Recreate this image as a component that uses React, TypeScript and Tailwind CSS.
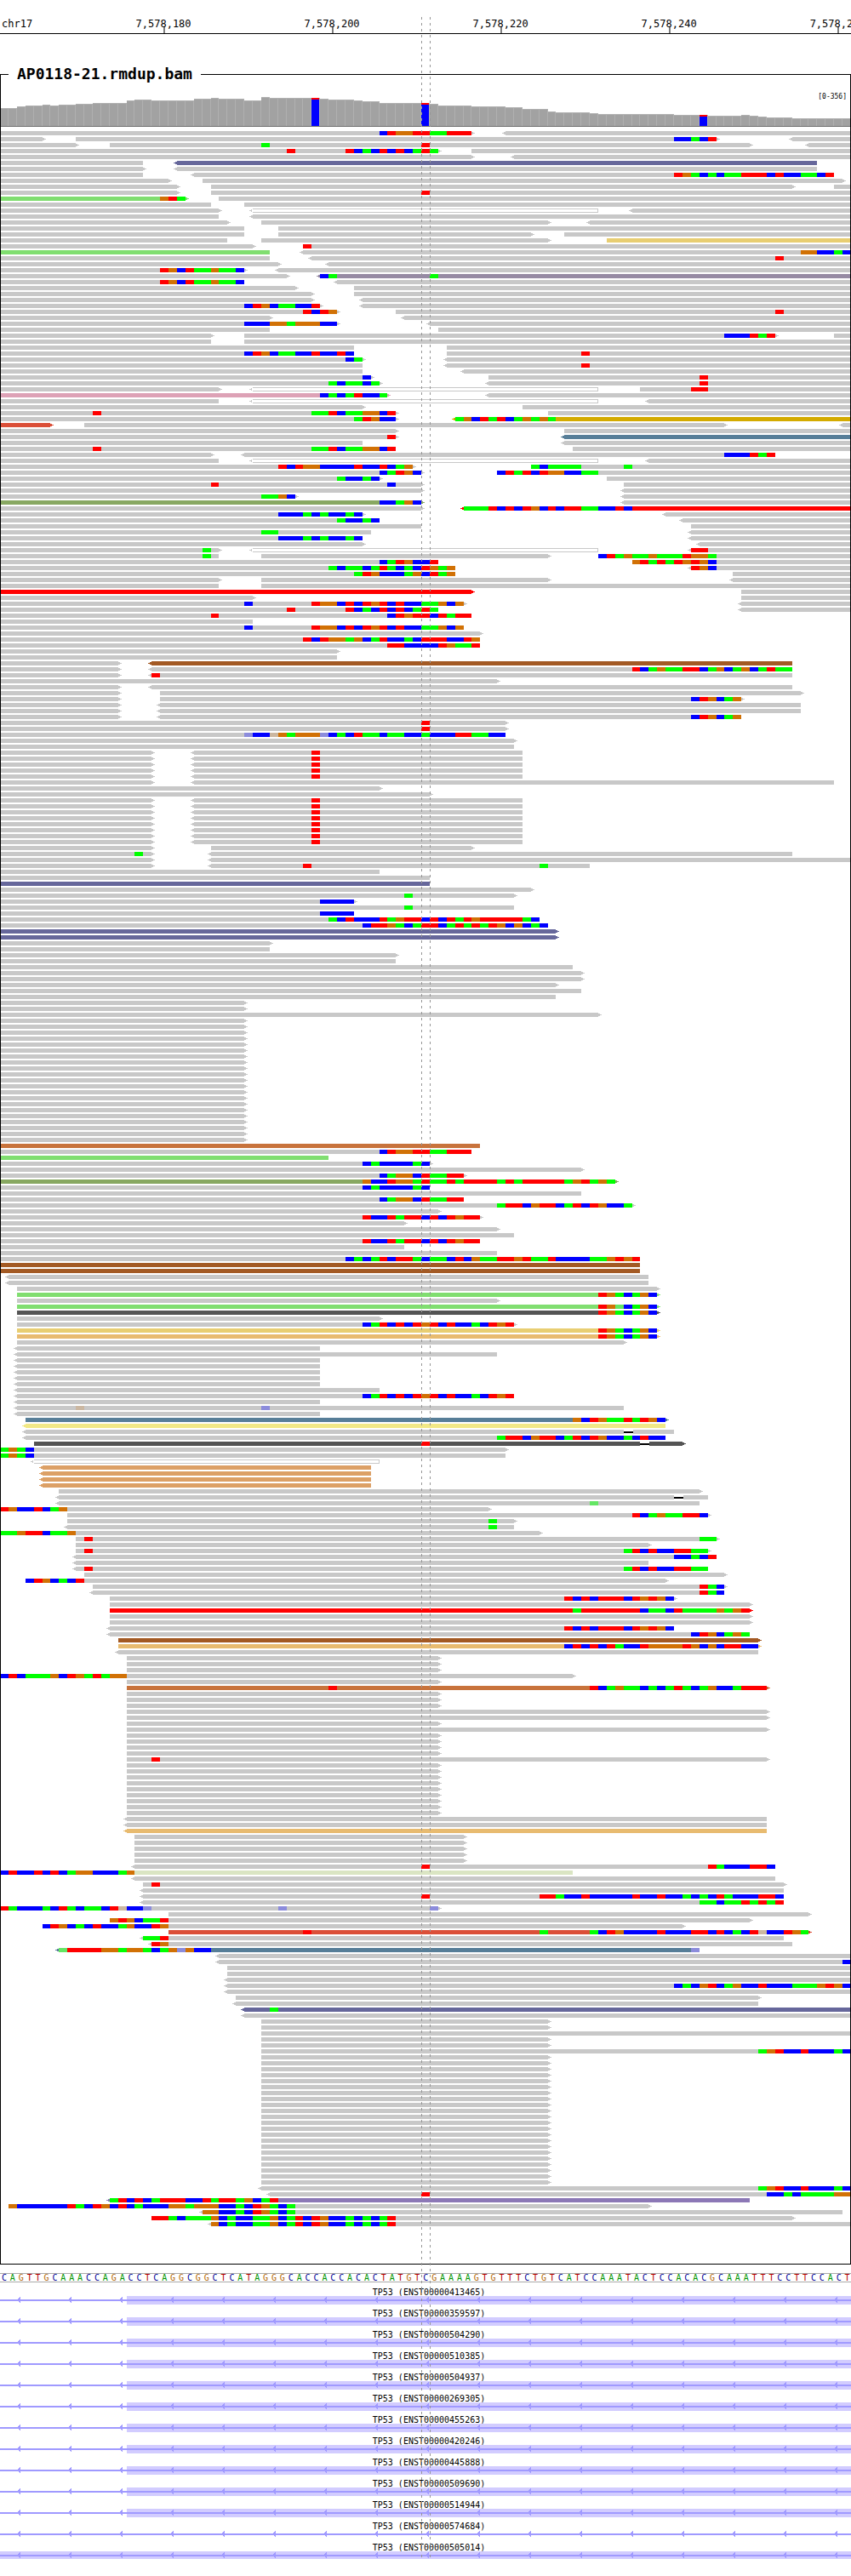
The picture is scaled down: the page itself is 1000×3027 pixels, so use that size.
import React from "react";

const BASES = 101;
const VIEW_WIDTH = 1000;
const ROW_PITCH = 7;
const READ_HEIGHT = 5;

/** Left edge of a base column, snapped to the pixel grid. */
const px = (base: number) => Math.round((base * VIEW_WIDTH) / BASES);
const percent = (base: number) => `${(base * 100) / BASES}%`;

const times = (n: number, row: string): string[] => Array.from({ length: n }, () => row);

/** Read tints by library or mate chromosome. */
const TINT: Record<string, string> = {
  plain: "#c8c8c8",
  hollow: "#c8c8c8",
  purple: "#66679b",
  green: "#80de70",
  yellow: "#e8ce72",
  mauve: "#968aa3",
  pink: "#dda2b6",
  gold: "#d4ab00",
  brick: "#db4f38",
  teal: "#577e98",
  olive: "#88a862",
  red: "#ff0000",
  brown: "#a35a24",
  copper: "#c8733c",
  dark: "#545454",
  tan: "#e8bb70",
  lemon: "#f1e886",
  orange: "#dca066",
  pale: "#dae5c3",
  violet: "#8c78b6",
};

/** Mismatch colours; lower case marks a low quality base. */
const MISMATCH: Record<string, string> = {
  A: "#00ff00",
  C: "#0000ff",
  G: "#d17105",
  T: "#ff0000",
  a: "#64e664",
  c: "#8c8cdc",
  g: "#cbb7a1",
};

/*
 * One string per row, reads separated by blanks:
 *   [<]start-end[>][:tint][|positionBASES]...
 * "<" and ">" give the strand arrow, "_" marks a deletion.
 */
const HOLLOW = "<30-71:hollow";
const SNP_PAIR = "0-18> <23-62|37T";
const CLIP_A = "37TGGCTCTGTCTCCAAGCG";

const ROWS: string[] = [
  "0-56>|45CTGGTTAATTT <60-101",
  "0-5> 9-85>|80CCACT <94-101",
  "0-9> 13-89>|31A|50T <96-101",
  "0-52>|34T|41TCACTCTCATA 56-101",
  "0-56> <61-101",
  "0-17 <21-97:purple",
  "0-17> <21-97",
  "0-17 <23-99|80TGACACAATTTCTCCAACT",
  "0-20> 24-100>",
  "0-21> 25-94> 99-101",
  "0-21> 25-101|50T",
  "0-22>:green|19GTA 26-101",
  "0-25 29-101",
  `0-26> ${HOLLOW} <75-101`,
  "0-26 <30-101",
  "0-27> 31-65> <70-101",
  "0-29 33-101",
  "0-29 33-63> 67-101",
  "0-27 31-65> 72-101:yellow",
  "0-30> 36-101|36T",
  "0-32:green <36-101|95GGCCAC",
  "0-32 <37-101|92T",
  "0-33> <39-101",
  "0-29>|19TGCTAAGAAC <33-101",
  "0-34> <38-101:mauve|38CA|51A",
  "0-29|19TGCTAAGAAC <40-101",
  "0-35> 42-101",
  "0-37> 42-101",
  "0-37> <43-101",
  "0-38>|29CTGCAACCT <43-101",
  "0-40>|36TCTG 47-101|92T",
  "0-32> <48-101",
  "0-40>|29CCCGGAGGGCC <51-101",
  "0-32 52-101",
  "0-25> 29-92>|86CCCTAT 99-101",
  "0-25 29-101",
  "0-42 53-101",
  "0-42|29CTGCAACCTCCTC 53-101|69T",
  "0-43>|41CA <53-101",
  "0-43 <53-101|69T",
  "0-43 <55-101",
  "0-44>|43C 58-101|83T",
  "0-45>|39ACAACA <58-101|83T",
  `0-26> ${HOLLOW} 76-101|82TT`,
  "0-46>:pink|38CACATCCA <58-101",
  `0-26 ${HOLLOW} <77-101`,
  "0-43> 62-101",
  "0-47>|11T|37AATCAAGGCT 65-101",
  "0-47>|42ATGCC <54-101:gold|54AGCTATCAGAGA",
  "0-6>:brick 10-86> <100-101",
  "0-47> 67-101",
  "0-47>|46T <67-101:teal",
  "0-43 <67-101",
  "0-47|11T|37AATCAAGGCT 68-101",
  "0-25> <29-92|86CCCTAT",
  `0-26 ${HOLLOW} <77-101`,
  "0-49>|33TCTGGCCCCTCCTCAG 63-101|63ACAAAA|74A",
  "0-50>|45CATGC 59-101|59CTATCTGGCCAA",
  "0-45>|40ACCAC 72-101",
  "0-50>|25T|46C 74-101",
  "0-50> <74-101",
  "0-35>|31AAGC <74-101",
  "0-50>:olive|45CCAGC <74-101",
  "0-50> <55-101:red|55AAATCTCTGCTCTTAACCTC",
  "0-43>|33CCCACACCAC <79-101",
  "0-45|40ACCAC <81-101",
  "0-50 82-101",
  "0-44|31AA <82-101",
  "0-43|33CCCACACCAC <82-101",
  "0-43> <83-101",
  `0-26>|24A ${HOLLOW} <82-101|82TT`,
  "0-26|24A 31-65> 71-101|71CTAGAAGAAATGGA",
  "0-52|45CATGCCT 75-101|75GTATATGTGC",
  "0-54|39ACAACATACACTGAG <82-101|82TGC",
  "0-54|42ATGCCCAGCTAG 87-101",
  "0-26> 31-65> <87-101",
  "0-26 31-101",
  "0-56>:red 88-101",
  "0-30> 88-101",
  `0-55>|29C|${CLIP_A} <88-101`,
  "0-52|34T|41TCACTCTCATA <88-101",
  "0-56|25T|46CTGTTCTATT",
  "0-30",
  `0-55|29C|${CLIP_A}`,
  "0-57>",
  "0-57|36TCTGGAGCATCCACTTTCCTG",
  "0-57|46TTCCCCTGAAT",
  "0-40>",
  "0-40",
  "0-14> <18-94:brown",
  "0-14> <18-94|75TCAGAATTCAGCAGCATAA",
  "0-14> <18-94|18T",
  "0-59>",
  "0-14> <18-94",
  "0-14> 19-95>",
  "0-14> 19-88>|82CTGCAG",
  ...times(2, "0-14> <19-95"),
  "0-14> <19-88|82CTGCAG",
  ...times(2, "0-60>|50T"),
  "0-60|29cCCgGAGGGcCACTAACAACCACCCTTAACC",
  "0-61>",
  "0-61",
  ...times(5, SNP_PAIR),
  "0-18> <23-99",
  "0-45>",
  "0-51>",
  ...times(8, SNP_PAIR),
  "0-18> 25-56>",
  "0-18>|16A <25-94",
  "0-18> <25-101",
  "0-18> <25-70|36T|64A",
  "0-45",
  "0-51",
  "0-51:purple",
  "0-63>",
  "0-61>|48A",
  "0-42>|38CCCC",
  "0-61|48A",
  "0-42|38CCCC",
  "0-64|39ACTCCCTAGTTCTCTATGTTTTTAC",
  "0-65|43CTTGACATTCATATATGCGCAC",
  ...times(2, "0-66>:purple"),
  "0-32>",
  "0-32",
  "0-47>",
  "0-47",
  "0-68",
  ...times(2, "0-69>"),
  "0-66>",
  "0-69",
  "0-66",
  ...times(2, "0-29>"),
  "0-71>",
  ...times(21, "0-29>"),
  "0-57:copper",
  "0-56|45CTGGTTAATTT",
  "0-39:green",
  "0-51>|43CACCCCAC",
  "0-69>",
  "0-55>|45CAGGCTAATT",
  "0-73>:olive|43GCCTGGATAATATTTTATATTTTTAGTAGA",
  "0-51|43CACCCCAC",
  "0-69",
  "0-55|45CAGGCTAATT",
  "0-75>|59ATTCGTTCATCTGCCA",
  "0-52>",
  "0-57>|43TCCTATTCTCTGTT",
  "0-48>",
  "0-59>",
  "0-61",
  "0-57|43TCCTATTCTCTGTT",
  "0-48",
  "0-59",
  "0-76|41CACATCTTACAACTCGAATTGTAATCCCCAAGTGT",
  ...times(2, "0-76:brown"),
  ...times(2, "<1-77"),
  "2-78>",
  "2-78>:green|71TGACAGC",
  "2-59>",
  "2-78>:green|71TGaCAGC",
  "2-78>:dark|71TGACAGC",
  "2-45>",
  "2-61>|43CATCTCTGTCTCCACTGT",
  "2-78>:yellow|71TGACAGC",
  "2-78>:tan|71TGACAGC",
  "2-74>",
  "<2-38",
  "<2-59",
  ...times(5, "<2-38"),
  "<2-45",
  "<2-61|43CATCTCTGTCTCCACTGT",
  "<2-38",
  "<2-74|9g|31c",
  "<2-38",
  "3-79>:teal|68GCTGAATATGC",
  "<3-79:lemon",
  "<3-80|74_",
  "<3-79|59ATTCGTTCATCTGCCACTCC",
  "4-81>:dark|50T|76_",
  "0-60>|0AGAC",
  "0-60|0AGAC",
  "<4-45:hollow",
  ...times(4, "<5-44:orange"),
  "7-83>",
  "<7-84|80_",
  "<7-83|70a",
  "0-58>|0TGCCTCAG",
  "8-84>|75TCAGAATTC",
  "8-61>|58A",
  "<8-61|58A",
  "0-64>|0AAGTTCAAG",
  "9-85>|10T|83AA",
  "9-77>",
  "9-84>|10T|74ATCTCCTTAA",
  "<9-85|80CCACT",
  "<9-77",
  "<9-84|10T|74ATCTCCTTAA",
  "10-86>",
  "3-79>|3CTGCACT",
  "11-86>|83TAC",
  "<11-86|83TAC",
  "13-80>|67TCTCTTTCTGTGC",
  "13-89>",
  "13-89>:red|68A|76CAACTAAAAGAGT",
  ...times(2, "13-89>"),
  "<13-80|67TCTCTTTCTGTGC",
  "<13-89|82CTGCAGA",
  "14-90>:brown",
  "14-90>:tan|67CTCTCTACCTGGGGTGCGCTTCC",
  "<14-90",
  ...times(3, "15-52>"),
  "0-68>|0CTCAAAGCTGATAGG",
  "15-52>",
  "15-91>:copper|39T|70TCAGAACACATACAGCCATTT",
  ...times(3, "15-52>"),
  ...times(2, "15-91>"),
  "15-52>",
  "15-91>",
  ...times(4, "15-52>"),
  "15-91>|18T",
  ...times(9, "15-52>"),
  ...times(2, "<15-91"),
  "<15-91:tan",
  ...times(5, "16-55>"),
  "<16-92|50T|84TACCCTTC",
  "0-68:pale|0CTCCTCTCAGGCCCAG",
  "<16-92",
  "17-93>|18T",
  "<17-93",
  "<17-93|50T|64TTACCTCCCCCTCCTCCACACTACCCTTC",
  "<17-93|83AACAATATAT",
  "0-52>|0TACCCACTACAACTgCCc|33c|51c",
  "20-96>",
  "13-89>|13GTGCAAT",
  "5-81>|5CTGCACTCCAGCCTG",
  "20-96>:brick|36T|64A|70ACTGCCCCTCCCTTCTCACTgCCTGA",
  "<17-93|17AAT",
  "<18-94|18TG",
  "<7-83:teal|7aTTTTGGAGGACAGcGCC|82c",
  "<26-101",
  "<26-101|100C",
  ...times(2, "27-101"),
  "<27-101",
  "<27-101|80CACGTCAGCCTCCCAAAGTGC",
  "<27-101",
  "28-90>",
  "<28-90",
  "<29-101:purple|32A",
  "<29-101",
  ...times(2, "31-65>"),
  "31-101",
  ...times(2, "31-65>"),
  "31-101|90AGTCCTCCCAC",
  ...times(22, "31-65>"),
  "<31-101|90AGTCCTCCCAC",
  "<32-101|50T|91CCACAAAAGG",
  "<13-89:violet|13ATCTCATTTCCTATTAGCAT",
  "1-77>|1GCCCCCCTACTGCTCACCCGGAGGGCCACTGACA",
  "<24-100|24GGCCACTGACA",
  "18-94>|18TTACAAAGCACCAAGCATCTGCCACACAT",
  "<25-101|25GCACCAAGCATCTGCCACACAT",
];

function Read({ code, y }: { code: string; y: number }) {
  const [head, ...marks] = code.split("|");
  const match = /^(<?)(\d+)-(\d+)(>?)(?::(\w+))?$/.exec(head);
  if (!match) return null;
  const [, left, from, to, right, tint = "plain"] = match;
  const x0 = px(Number(from));
  const x1 = px(Number(to));
  const fill = TINT[tint];
  let d = `M${x0} ${y}H${x1}`;
  d += right ? `v1h2v1h2v1h-2v1h-2v1` : `v5`;
  d += `H${x0}`;
  d += left ? `v-1h-2v-1h-2v-1h2v-1h2z` : `z`;
  return (
    <g>
      <path d={d} fill={fill} />
      {tint === "hollow" && <rect x={x0 - 1} y={y + 1} width={x1 - x0} height={3} fill="#ffffff" />}
      {marks.map((mark) => {
        const at = parseInt(mark, 10);
        return mark
          .replace(/^\d+/, "")
          .split("")
          .map((base, i) => {
            const bx = px(at + i);
            const w = px(at + i + 1) - bx;
            if (base === "_") {
              return (
                <g key={at + i}>
                  <rect x={bx} y={y} width={w + 1} height={READ_HEIGHT} fill="#ffffff" />
                  <rect x={bx} y={y + 2} width={w + 1} height={2} fill="#000000" />
                </g>
              );
            }
            return (
              <rect key={at + i} x={bx} y={y} width={w} height={READ_HEIGHT} fill={MISMATCH[base]} />
            );
          });
      })}
    </g>
  );
}

function Alignments() {
  const height = ROWS.length * ROW_PITCH;
  return (
    <svg
      role="img"
      aria-label="Aligned reads"
      className="block w-full"
      height={height}
      viewBox={`1 0 ${VIEW_WIDTH - 2} ${height}`}
      preserveAspectRatio="none"
      shapeRendering="crispEdges"
    >
      {ROWS.map((row, i) => (
        <g key={i}>
          {row.split(" ").map((code) => (
            <Read key={code} code={code} y={i * ROW_PITCH} />
          ))}
        </g>
      ))}
    </svg>
  );
}

/** Depth profile as runs of [number of bases, bar height]. */
const DEPTH_RUNS: [number, number][] = [
  [2, 21], [1, 23], [2, 24], [1, 25], [1, 24], [2, 25], [2, 26], [4, 27], [1, 30], [2, 31],
  [5, 30], [2, 32], [1, 33], [3, 32], [2, 30], [1, 34], [6, 33], [1, 32], [3, 31], [1, 30],
  [2, 29], [6, 27], [1, 26], [4, 24], [4, 23], [2, 22], [3, 20], [1, 17], [4, 16], [1, 15],
  [9, 14], [4, 13], [4, 12], [1, 13], [1, 12], [1, 11], [3, 10], [7, 9],
];
const DEPTH = DEPTH_RUNS.flatMap(([n, h]) => Array.from({ length: n }, () => h));
const VARIANTS = [37, 50, 83];

function Coverage() {
  return (
    <svg
      role="img"
      aria-label="Read depth"
      className="block w-full"
      height={35}
      viewBox={`1 0 ${VIEW_WIDTH - 2} 35`}
      preserveAspectRatio="none"
      shapeRendering="crispEdges"
    >
      {DEPTH.map((h, i) => {
        const x = px(i);
        const w = px(i + 1) - x;
        const variant = VARIANTS.includes(i);
        return (
          <g key={i}>
            <rect x={x} y={34 - h} width={w} height={h} fill="#b0b0b0" />
            <rect x={x} y={35 - h} width={w - 1} height={h - 1} fill="#a2a2a2" />
            {variant && <rect x={x} y={34 - h} width={w - 1} height={2} fill="#ff0000" />}
            {variant && <rect x={x} y={36 - h} width={w - 1} height={h - 2} fill="#0000ff" />}
          </g>
        );
      })}
      <rect x={0} y={34} width={VIEW_WIDTH} height={1} fill="#6e6e6e" />
    </svg>
  );
}

const TICKS = [
  { base: 19.5, label: "7,578,180" },
  { base: 39.5, label: "7,578,200" },
  { base: 59.5, label: "7,578,220" },
  { base: 79.5, label: "7,578,240" },
  { base: 99.5, label: "7,578,260" },
];

function Ruler() {
  return (
    <header className="relative h-10 overflow-hidden border-b border-black pl-0.5 pt-5 text-xs leading-4">
      <span>chr17</span>
      {TICKS.map(({ base, label }) => (
        <div
          key={label}
          className="absolute top-5 flex h-5 -translate-x-1/2 flex-col items-center"
          style={{ left: percent(base) }}
        >
          <span className="h-3 pr-0.5">{label}</span>
          <span className="h-2 w-px bg-black" />
        </div>
      ))}
    </header>
  );
}

const REFERENCE =
  "CAGTTGCAAACCAGACCTCAGGCGGCTCATAGGGCACCACCACACTATGTCGAAAAGTGTTTCTGTCATCCAAATACTCCACACGCAAATTTCCTTCCACT";

const BASE_CLASS: Record<string, string> = {
  A: "text-[#009600]",
  C: "text-[#000096]",
  G: "text-[#b4690a]",
  T: "text-[#b40000]",
};

function Sequence() {
  return (
    <div className="mt-2.5 flex h-[11px] border-y border-[#a9a9a9] text-[10px] leading-[10px]">
      {REFERENCE.split("").map((base, i) => (
        <span key={i} className={`min-w-0 flex-1 text-center ${BASE_CLASS[base]}`}>
          {base}
        </span>
      ))}
    </div>
  );
}

type Exon = "partial" | "none" | "full";

const TRANSCRIPTS: { id: string; exon: Exon }[] = [
  { id: "ENST00000413465", exon: "partial" },
  { id: "ENST00000359597", exon: "partial" },
  { id: "ENST00000504290", exon: "partial" },
  { id: "ENST00000510385", exon: "partial" },
  { id: "ENST00000504937", exon: "partial" },
  { id: "ENST00000269305", exon: "partial" },
  { id: "ENST00000455263", exon: "partial" },
  { id: "ENST00000420246", exon: "partial" },
  { id: "ENST00000445888", exon: "partial" },
  { id: "ENST00000509690", exon: "partial" },
  { id: "ENST00000514944", exon: "partial" },
  { id: "ENST00000574684", exon: "none" },
  { id: "ENST00000505014", exon: "full" },
];

function Transcript({ id, exon }: { id: string; exon: Exon }) {
  const start = exon === "partial" ? px(15) : 0;
  return (
    <li className="h-[25px]">
      <p className="h-3 pl-2 text-center text-[10px] leading-[15px]">TP53 ({id})</p>
      <svg
        aria-hidden="true"
        className="block w-full"
        height={10}
        viewBox={`0 0 ${VIEW_WIDTH} 10`}
        preserveAspectRatio="none"
        shapeRendering="crispEdges"
      >
        {exon !== "none" && (
          <rect
            x={start}
            y={0}
            width={VIEW_WIDTH - start}
            height={exon === "full" ? 9 : 10}
            fill="#d2ccff"
          />
        )}
        <rect x={0} y={4} width={VIEW_WIDTH} height={2} fill="#a09aff" />
        {Array.from({ length: 17 }, (_, i) => (
          <path key={i} d={`M${20 + i * 60} 4h1v-1h1v-1h1v-1h1v7h-1v-1h-1v-1h-1v-1h-1z`} fill="#a09aff" />
        ))}
      </svg>
    </li>
  );
}

const GUIDE =
  "pointer-events-none absolute bottom-[22px] top-5 w-px bg-[repeating-linear-gradient(to_bottom,#969696_0px,#969696_3px,transparent_3px,transparent_7px)]";

export default function App() {
  return (
    <main className="relative overflow-hidden bg-white pb-5 font-['DejaVu_Sans_Mono',monospace] text-black">
      <Ruler />

      <fieldset className="mt-[35px] min-w-0 border border-black pb-[42px]">
        <legend className="ml-[9px] px-2.5 pb-0.5 text-lg font-bold leading-[23px]">
          AP0118-21.rmdup.bam
        </legend>
        <p className="flex h-3.5 items-end justify-end pr-1 text-[8px] leading-none">
          <span className="h-1">[0-356]</span>
        </p>
        <Coverage />
        <div className="pt-[5px]">
          <Alignments />
        </div>
      </fieldset>

      <Sequence />

      <ul className="mt-1">
        {TRANSCRIPTS.map(({ id, exon }) => (
          <Transcript key={id} id={id} exon={exon} />
        ))}
      </ul>

      <div className={GUIDE} style={{ left: percent(50) }} />
      <div className={GUIDE} style={{ left: percent(51) }} />
    </main>
  );
}
